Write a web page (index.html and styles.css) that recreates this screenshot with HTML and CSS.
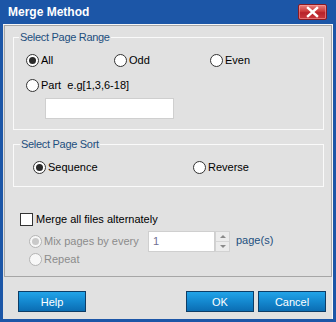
FILE: index.html
```html
<!DOCTYPE html>
<html>
<head>
<meta charset="utf-8">
<link rel="stylesheet" href="styles.css">
</head>
<body>
<div class="window">
  <div class="titlebar">
    <span class="title">Merge Method</span>
    <span class="close">
      <svg width="29" height="16" viewBox="0 0 29 16">
        <path d="M10 4 L19 12 M19 4 L10 12" stroke="#fff" stroke-width="2.4" stroke-linecap="square"/>
      </svg>
    </span>
  </div>
  <div class="client">
    <div class="panel">
      <fieldset class="group range">
        <legend>Select Page Range</legend>
        <div class="rows">
          <div class="grid3">
            <label class="opt"><span class="radio checked"></span>All</label>
            <label class="opt"><span class="radio"></span>Odd</label>
            <label class="opt"><span class="radio"></span>Even</label>
          </div>
          <label class="opt part"><span class="radio"></span><span class="pre">Part  e.g[1,3,6-18]</span></label>
          <div class="textbox"></div>
        </div>
      </fieldset>
      <fieldset class="group sort">
        <legend>Select Page Sort</legend>
        <div class="rows sortrows">
          <label class="opt"><span class="radio checked"></span>Sequence</label>
          <label class="opt"><span class="radio"></span>Reverse</label>
        </div>
      </fieldset>
      <div class="alt">
        <label class="opt check"><span class="checkbox"></span>Merge all files alternately</label>
        <div class="sub">
          <div class="opt mix disabled"><span class="radio checked"></span><span class="mixlabel">Mix pages by every</span>
            <span class="spin"><span class="spinval">1</span></span>
            <span class="spinbtns"><span class="up"></span><span class="down"></span></span>
            <span class="pages">page(s)</span>
          </div>
          <div class="opt disabled repeat"><span class="radio"></span>Repeat</div>
        </div>
      </div>
    </div>
    <div class="buttons">
      <span class="btn">Help</span>
      <span class="spacer"></span>
      <span class="btn">OK</span>
      <span class="btn">Cancel</span>
    </div>
  </div>
</div>
</body>
</html>
```
FILE: styles.css
```css
html, body {
  margin: 0;
  padding: 0;
}
body {
  font-family: "Liberation Sans", Arial, sans-serif;
  font-size: 11px;
  color: #000;
}
.window {
  width: 336px;
  height: 322px;
  background: #1c56a7;
  display: flex;
  flex-direction: column;
}
.titlebar {
  height: 24px;
  flex: none;
  display: flex;
  align-items: center;
  justify-content: space-between;
  padding: 0 9px 0 8px;
  box-sizing: border-box;
}
.title {
  color: #fff;
  font-weight: bold;
  font-size: 12px;
  margin-top: -1px;
}
.close {
  width: 29px;
  height: 16px;
  margin-top: -1px;
  box-sizing: border-box;
  border: 1px solid #8a1a22;
  border-radius: 2px;
  background: linear-gradient(#e9807e, #cc3a3a 45%, #b8222a 55%, #c9393d);
  box-shadow: inset 0 0 0 1px rgba(255, 170, 170, 0.5);
  display: flex;
  align-items: center;
  justify-content: center;
  position: relative;
}
.close svg {
  position: absolute;
  left: -1px;
  top: -1px;
}
.client {
  flex: 1;
  margin: 0 3px 3px;
  background: #e1e1e1;
  border-top: 1px solid #f6f6f6;
  padding: 0 1px;
  display: flex;
  flex-direction: column;
  box-shadow: inset -1px 0 0 #f6f6f6;
}
.panel {
  border: 1px solid #a6a6a6;
  padding: 4px 7px 9px 8px;
  display: flex;
  flex-direction: column;
}
.group {
  margin: 0;
  border: 1px solid #fafafa;
  padding: 8px 0 10px 0;
  min-width: 0;
}
.group legend {
  padding: 0 1px;
  margin-left: 5px;
  line-height: 14px;
  color: #1d4f7e;
  letter-spacing: -0.3px;
}
.sort {
  margin-top: 7px;
  padding: 8px 0 11px 0;
}
.sort legend {
  margin-left: 6px;
}
.rows {
  padding-left: 12px;
}
.grid3 {
  display: grid;
  grid-template-columns: 88px 96px 1fr;
}
.opt {
  display: flex;
  align-items: center;
  height: 16px;
  white-space: nowrap;
}
.part {
  margin-top: 9px;
}
.pre {
  white-space: pre;
}
.radio {
  width: 13px;
  height: 13px;
  box-sizing: border-box;
  border: 1px solid #333;
  border-radius: 50%;
  background: #fff;
  margin-right: 2px;
  flex: none;
  display: flex;
  align-items: center;
  justify-content: center;
}
.radio.checked::after {
  content: "";
  width: 7px;
  height: 7px;
  border-radius: 50%;
  background: #2a2a2a;
}
.textbox {
  margin: 5px 0 0 19px;
  width: 129px;
  height: 21px;
  box-sizing: border-box;
  background: #fff;
  border: 1px solid #cfcfcf;
}
.sortrows {
  padding-left: 19px;
  display: grid;
  grid-template-columns: 160px 1fr;
}
.alt {
  margin-top: 24px;
  padding-left: 7px;
}
.checkbox {
  width: 13px;
  height: 13px;
  box-sizing: border-box;
  border: 1px solid #333;
  background: #fff;
  margin-right: 3px;
  flex: none;
}
.sub {
  padding-left: 9px;
  margin-top: 6px;
}
.disabled {
  color: #8c8c8c;
}
.disabled .radio {
  border-color: #b4b4b4;
  background: #f7f7f7;
}
.disabled .radio.checked::after {
  background: #c9c9c9;
}
.mixlabel {
  width: 104px;
}
.spin {
  width: 67px;
  height: 21px;
  box-sizing: border-box;
  border: 1px solid #cfcfcf;
  background: #fff;
  display: flex;
  align-items: center;
  padding-left: 4px;
  color: #6f6f92;
  flex: none;
}
.spinbtns {
  width: 15px;
  height: 21px;
  box-sizing: border-box;
  border: 1px solid #d2d2d2;
  background: #ececec;
  display: flex;
  flex-direction: column;
  flex: none;
}
.spinbtns span {
  flex: 1;
  display: flex;
  align-items: center;
  justify-content: center;
}
.spinbtns .up {
  border-bottom: 1px solid #d6d6d6;
}
.spinbtns .up::after {
  content: "";
  border-left: 3px solid transparent;
  border-right: 3px solid transparent;
  border-bottom: 3px solid #8a8a8a;
}
.spinbtns .down::after {
  content: "";
  border-left: 3px solid transparent;
  border-right: 3px solid transparent;
  border-top: 3px solid #8a8a8a;
}
.pages {
  color: #1d4f7e;
  margin-left: 6px;
  margin-top: -2px;
}
.repeat {
  margin-top: 2px;
}
.buttons {
  margin-top: 14px;
  padding: 0 6px 0 14px;
  display: flex;
  gap: 4px;
}
.spacer {
  flex: 1;
}
.btn {
  width: 68px;
  height: 21px;
  box-sizing: border-box;
  border: 1px solid #0e3d66;
  background: linear-gradient(#22a4e8, #1488cf 50%, #0b6db3);
  color: #fff;
  display: flex;
  align-items: center;
  justify-content: center;
}
```
